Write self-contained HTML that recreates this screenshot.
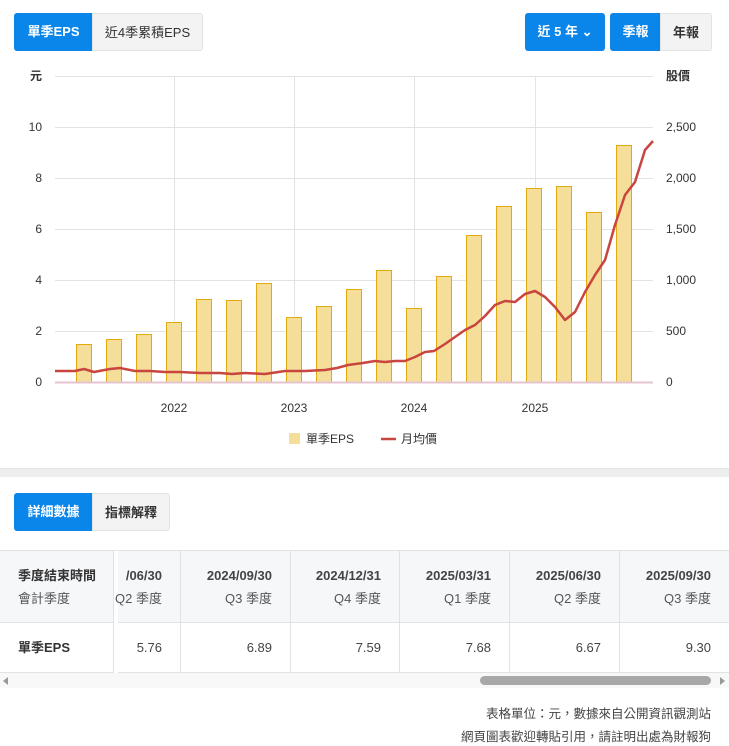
<!DOCTYPE html>
<html><head><meta charset="utf-8"><style>
*{margin:0;padding:0;box-sizing:border-box}
body{width:729px;height:746px;background:#fff;font-family:"Liberation Sans","Noto Sans CJK TC",sans-serif;color:#333;position:relative;overflow:hidden}
.btn{position:absolute;height:38px;line-height:38px;font-size:13px;text-align:center;font-weight:bold}
.b{background:#0a86ea;color:#fff}
.g{background:#f3f3f3;color:#333;border:1px solid #e2e2e2}
.tbl{position:absolute;top:550px;left:0;width:729px;height:123px;border-top:1px solid #e2e2e2}
.cell{position:absolute;font-size:13px;line-height:16px}
.foot{position:absolute;right:18px;font-size:12.5px;color:#444}
</style></head><body>
<div class="btn b" style="left:14px;top:13px;width:79px;border-radius:3px 0 0 3px">單季EPS</div>
<div class="btn g" style="left:92px;top:13px;width:111px;border-radius:0 3px 3px 0;font-weight:normal">近4季累積EPS</div>
<div class="btn b" style="left:525px;top:13px;width:80px;border-radius:3px">近 5 年 ⌄</div>
<div class="btn b" style="left:610px;top:13px;width:51px;border-radius:3px 0 0 3px">季報</div>
<div class="btn g" style="left:660px;top:13px;width:52px;border-radius:0 3px 3px 0">年報</div>

<svg style="position:absolute;left:0;top:0" width="729" height="460" font-family="Liberation Sans,Noto Sans CJK TC,sans-serif">
<g stroke="#e3e3e3" stroke-width="1">
<line x1="55" x2="653" y1="76.5" y2="76.5"/><line x1="55" x2="653" y1="127.5" y2="127.5"/><line x1="55" x2="653" y1="178.5" y2="178.5"/><line x1="55" x2="653" y1="229.5" y2="229.5"/><line x1="55" x2="653" y1="280.5" y2="280.5"/><line x1="55" x2="653" y1="331.5" y2="331.5"/>
<line x1="174.5" x2="174.5" y1="76" y2="383"/><line x1="294.5" x2="294.5" y1="76" y2="383"/><line x1="414.5" x2="414.5" y1="76" y2="383"/><line x1="535.5" x2="535.5" y1="76" y2="383"/>
</g>
<g fill="#333" font-size="12" text-anchor="end">
<text x="42" y="80" font-weight="bold">元</text>
<text x="42" y="131">10</text><text x="42" y="182">8</text><text x="42" y="233">6</text><text x="42" y="284">4</text><text x="42" y="335">2</text><text x="42" y="386">0</text>
</g>
<g fill="#333" font-size="12">
<text x="666" y="80" font-weight="bold">股價</text>
<text x="666" y="131">2,500</text><text x="666" y="182">2,000</text><text x="666" y="233">1,500</text><text x="666" y="284">1,000</text><text x="666" y="335">500</text><text x="666" y="386">0</text>
</g>
<g fill="#333" font-size="12" text-anchor="middle">
<text x="174" y="412">2022</text><text x="294" y="412">2023</text><text x="414" y="412">2024</text><text x="535" y="412">2025</text>
</g>
<g fill="#f5de9a" stroke="#e0aa10" stroke-width="1">
<rect x="76.5" y="344.5" width="15" height="38"/>
<rect x="106.5" y="339.5" width="15" height="43"/>
<rect x="136.5" y="334.5" width="15" height="48"/>
<rect x="166.5" y="322.5" width="15" height="60"/>
<rect x="196.5" y="299.5" width="15" height="83"/>
<rect x="226.5" y="300.5" width="15" height="82"/>
<rect x="256.5" y="283.5" width="15" height="99"/>
<rect x="286.5" y="317.5" width="15" height="65"/>
<rect x="316.5" y="306.5" width="15" height="76"/>
<rect x="346.5" y="289.5" width="15" height="93"/>
<rect x="376.5" y="270.5" width="15" height="112"/>
<rect x="406.5" y="308.5" width="15" height="74"/>
<rect x="436.5" y="276.5" width="15" height="106"/>
<rect x="466.5" y="235.5" width="15" height="147"/>
<rect x="496.5" y="206.5" width="15" height="176"/>
<rect x="526.5" y="188.5" width="15" height="194"/>
<rect x="556.5" y="186.5" width="15" height="196"/>
<rect x="586.5" y="212.5" width="15" height="170"/>
<rect x="616.5" y="145.5" width="15" height="237"/>
</g>
<line x1="55" x2="653" y1="382.5" y2="382.5" stroke="#e4c4cf" stroke-width="2"/>
<polyline fill="none" stroke="#c9453f" stroke-width="2.5" stroke-linejoin="round" points="55,371 75,371 84,369 94,372 110,369 120,368 135,371 150,371 165,372 180,372 200,373 220,373 232,374 245,373 265,374 285,371 305,371 325,370 337,368 348,365 363,363 375,361 385,362 395,361 405,361 415,357 425,352 434,351 445,344 455,337 465,330 475,325 485,316 495,305 505,301 515,302 525,294 535,291 545,297 555,307 565,320 575,312 585,292 595,275 605,260 615,225 625,195 635,182 645,150 653,141"/>
<rect x="289" y="433" width="11" height="11" fill="#f5de9a"/>
<text x="306" y="443" font-size="12" fill="#333">單季EPS</text>
<line x1="381" x2="396" y1="439" y2="439" stroke="#c9453f" stroke-width="2.5"/>
<text x="401" y="443" font-size="12" fill="#333">月均價</text>
</svg>
<div style="position:absolute;left:0;top:468px;width:729px;height:9px;background:#eee;border-top:1px solid #e3e3e3"></div>

<div class="btn b" style="left:14px;top:493px;width:79px;border-radius:3px 0 0 3px">詳細數據</div>
<div class="btn g" style="left:92px;top:493px;width:78px;border-radius:0 3px 3px 0">指標解釋</div>

<div class="tbl">
<div style="position:absolute;left:0;top:0;width:729px;height:72px;background:#f6f7f9;border-bottom:1px solid #e2e2e2"></div>
<div style="position:absolute;left:0;top:72px;width:729px;height:50px;border-bottom:1px solid #e2e2e2"></div>
<div style="position:absolute;left:114px;top:0;width:4px;height:123px;background:#fff"></div>
<div style="position:absolute;left:113px;top:0;width:1px;height:123px;background:#e2e2e2"></div>
<div style="position:absolute;left:180px;top:0;width:1px;height:122px;background:#e2e2e2"></div>
<div style="position:absolute;left:290px;top:0;width:1px;height:122px;background:#e2e2e2"></div>
<div style="position:absolute;left:399px;top:0;width:1px;height:122px;background:#e2e2e2"></div>
<div style="position:absolute;left:509px;top:0;width:1px;height:122px;background:#e2e2e2"></div>
<div style="position:absolute;left:619px;top:0;width:1px;height:122px;background:#e2e2e2"></div>
<div class="cell" style="left:18px;top:17px;font-weight:bold">季度結束時間</div>
<div class="cell" style="left:18px;top:40px;color:#555">會計季度</div>
<div class="cell" style="left:18px;top:89px;font-weight:bold">單季EPS</div>
<div class="cell" style="right:567px;top:17px;font-weight:bold;color:#444">/06/30</div>
<div class="cell" style="right:567px;top:40px;color:#555">Q2 季度</div>
<div class="cell" style="right:567px;top:89px;color:#444">5.76</div>
<div class="cell" style="right:457px;top:17px;font-weight:bold;color:#444">2024/09/30</div>
<div class="cell" style="right:457px;top:40px;color:#555">Q3 季度</div>
<div class="cell" style="right:457px;top:89px;color:#444">6.89</div>
<div class="cell" style="right:348px;top:17px;font-weight:bold;color:#444">2024/12/31</div>
<div class="cell" style="right:348px;top:40px;color:#555">Q4 季度</div>
<div class="cell" style="right:348px;top:89px;color:#444">7.59</div>
<div class="cell" style="right:238px;top:17px;font-weight:bold;color:#444">2025/03/31</div>
<div class="cell" style="right:238px;top:40px;color:#555">Q1 季度</div>
<div class="cell" style="right:238px;top:89px;color:#444">7.68</div>
<div class="cell" style="right:128px;top:17px;font-weight:bold;color:#444">2025/06/30</div>
<div class="cell" style="right:128px;top:40px;color:#555">Q2 季度</div>
<div class="cell" style="right:128px;top:89px;color:#444">6.67</div>
<div class="cell" style="right:18px;top:17px;font-weight:bold;color:#444">2025/09/30</div>
<div class="cell" style="right:18px;top:40px;color:#555">Q3 季度</div>
<div class="cell" style="right:18px;top:89px;color:#444">9.30</div>
</div>
<div style="position:absolute;left:0;top:673px;width:729px;height:15px;background:#f8f8f8"></div>
<div style="position:absolute;left:3px;top:677px;width:0;height:0;border-top:4px solid transparent;border-bottom:4px solid transparent;border-right:5px solid #999"></div>
<div style="position:absolute;left:720px;top:677px;width:0;height:0;border-top:4px solid transparent;border-bottom:4px solid transparent;border-left:5px solid #999"></div>
<div style="position:absolute;left:480px;top:676px;width:231px;height:9px;background:#a8a8a8;border-radius:5px"></div>
<div class="foot" style="top:703px">表格單位：元，數據來自公開資訊觀測站</div>
<div class="foot" style="top:726px">網頁圖表歡迎轉貼引用，請註明出處為財報狗</div>
</body></html>
